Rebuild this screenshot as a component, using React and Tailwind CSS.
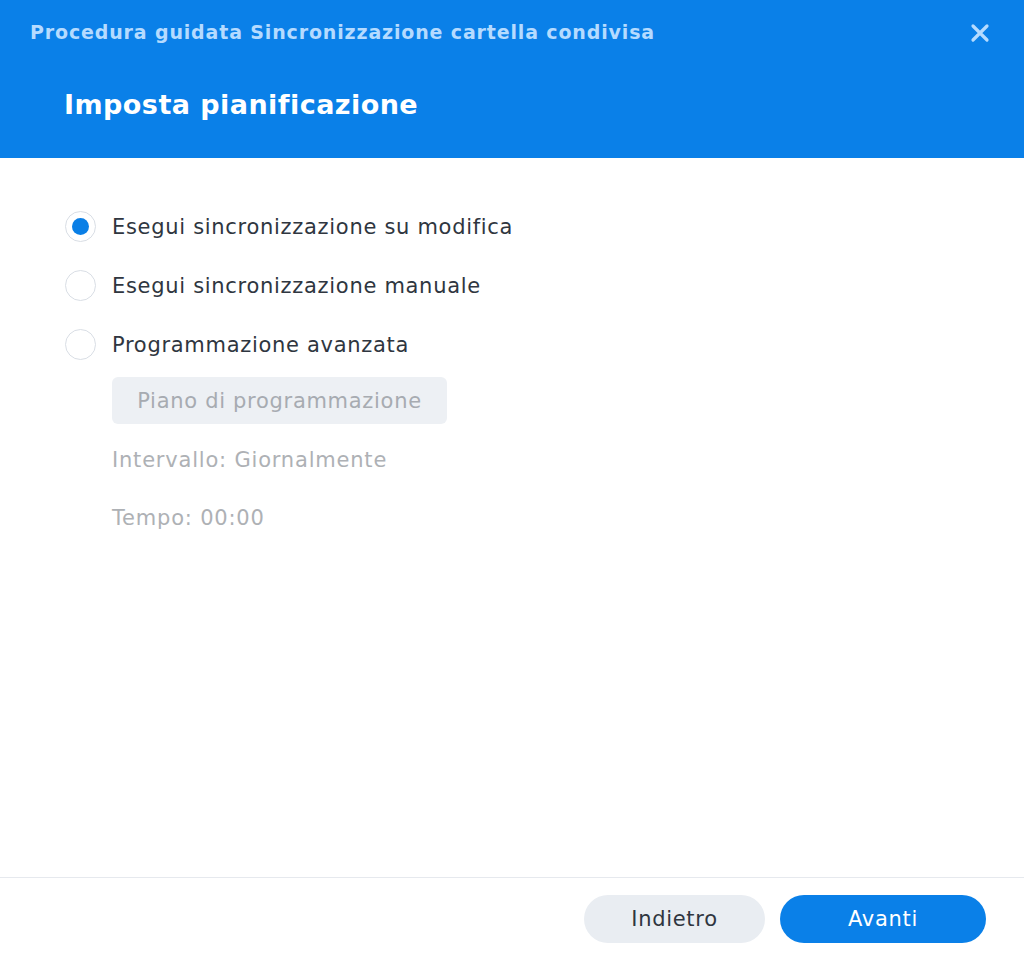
import React from "react";

const font = { fontFamily: '"DejaVu Sans", Verdana, sans-serif' };

function Radio({ checked, label }) {
  return (
    <div className="flex items-center h-[30px]">
      <div className="w-[31px] h-[31px] rounded-full border border-[#d9dee5] bg-white flex items-center justify-center shrink-0">
        {checked && <div className="w-[17px] h-[17px] rounded-full bg-[#0a7fe6]" />}
      </div>
      <span className="ml-[16px] mt-[3px] text-[21px] tracking-[0.7px] text-[#2f3640]">{label}</span>
    </div>
  );
}

export default function App() {
  return (
    <div className="w-[1024px] h-[959px] bg-white flex flex-col" style={font}>
      <div className="h-[158px] bg-[#0a80e8] flex flex-col shrink-0">
        <div className="flex items-center justify-between pl-[30px] pr-[34px] pt-[18px] h-[46px]">
          <span className="text-[19px] font-bold text-[#b5dbff] tracking-[0.85px]">
            Procedura guidata Sincronizzazione cartella condivisa
          </span>
          <svg width="20" height="20" viewBox="0 0 20 20" className="mt-[2px]">
            <path d="M3 3 L17 17 M17 3 L3 17" stroke="#b5dbff" strokeWidth="3.2" strokeLinecap="round" />
          </svg>
        </div>
        <div className="pl-[64px] pt-[39px]">
          <span className="text-[27px] font-bold text-white tracking-[0.45px]">Imposta pianificazione</span>
        </div>
      </div>
      <div className="flex-1 flex flex-col pl-[65px] pt-[53px]">
        <div className="flex flex-col gap-[29px]">
          <Radio checked label="Esegui sincronizzazione su modifica" />
          <Radio label="Esegui sincronizzazione manuale" />
          <Radio label="Programmazione avanzata" />
        </div>
        <div className="pl-[47px] mt-[18px] flex flex-col">
          <div className="w-[335px] h-[47px] pt-[3px] rounded-[6px] bg-[#edf0f4] flex items-center justify-center text-[21px] tracking-[0.7px] text-[#a7abb1]">
            Piano di programmazione
          </div>
          <div className="mt-[22px] text-[21px] tracking-[0.8px] text-[#aeb1b5] leading-[28px]">Intervallo: Giornalmente</div>
          <div className="mt-[30px] text-[21px] tracking-[0.8px] text-[#aeb1b5] leading-[28px]">Tempo: 00:00</div>
        </div>
      </div>
      <div className="h-[82px] border-t border-[#e6e9ee] flex items-center justify-end pr-[38px] gap-[15px] shrink-0">
        <button className="w-[181px] h-[48px] pt-[3px] rounded-full bg-[#e9edf2] text-[21px] tracking-[0.7px] text-[#2f3640]">Indietro</button>
        <button className="w-[206px] h-[48px] pt-[3px] rounded-full bg-[#0a80e8] text-[21px] tracking-[0.7px] text-white">Avanti</button>
      </div>
    </div>
  );
}
